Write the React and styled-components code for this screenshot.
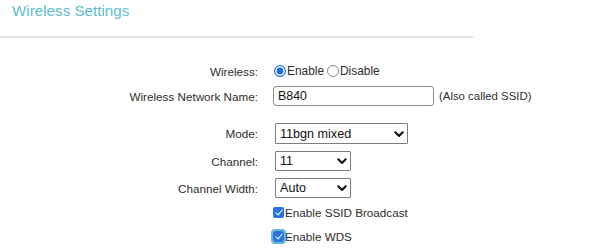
import React from "react";
import styled, { createGlobalStyle } from "styled-components";

const Global = createGlobalStyle`
  html, body { margin: 0; padding: 0; background: #fff; }
  body { font-family: "Liberation Sans", Arial, Helvetica, sans-serif; color: #333; }
`;

const Page = styled.div`
  width: 600px;
  height: 252px;
  overflow: hidden;
  background: #fff;
`;

const Header = styled.div`
  width: 473px;
  height: 38px;
  padding: 2px 0 0 12px;
  box-sizing: border-box;
  border-bottom: 2px solid #e2e2e2;
`;

const Title = styled.h1`
  margin: 0;
  font-size: 15.2px;
  line-height: 18px;
  font-weight: normal;
  color: #5cbdd1;
`;

const Form = styled.div`
  display: flex;
  flex-direction: column;
  padding-top: 23px;
`;

const Row = styled.div`
  display: grid;
  grid-template-columns: 258px auto;
  column-gap: 15px;
  align-items: center;
  height: ${(p) => p.$h || 20}px;
  margin-top: ${(p) => p.$gap || 0}px;
`;

const Label = styled.div`
  text-align: right;
  font-size: 11.7px;
  color: #2e2e2e;
  white-space: nowrap;
`;

const Controls = styled.div`
  display: flex;
  align-items: center;
  font-size: 11.9px;
  color: #2e2e2e;
  white-space: nowrap;
`;

const RadioLabel = styled.label`
  display: inline-flex;
  align-items: center;
  margin-right: 2px;
`;

const Radio = styled.input.attrs({ type: "radio" })`
  appearance: none;
  width: 12px;
  height: 12px;
  margin: 0 1px 0 1px;
  border-radius: 50%;
  box-sizing: border-box;
  border: 1px solid #8a8a8a;
  background: #fff;
  &:checked {
    border: 1px solid #1b6fe0;
    background: #1b6fe0;
    box-shadow: inset 0 0 0 1.6px #fff;
  }
`;

const TextInput = styled.input`
  width: 161px;
  height: 20px;
  box-sizing: border-box;
  border: 1px solid #8d8d8d;
  border-radius: 3px;
  padding: 0 4px;
  font-family: "Liberation Sans", Arial, sans-serif;
  font-size: 12.4px;
  color: #111;
  outline: none;
`;

const Note = styled.span`
  margin-left: 5px;
  font-size: 11.4px;
  color: #2e2e2e;
`;

const SelectWrap = styled.div`
  position: relative;
  margin-left: 2px;
  width: ${(p) => p.$w}px;
  height: ${(p) => p.$h || 20}px;
`;

const Select = styled.select`
  appearance: none;
  width: 100%;
  height: 100%;
  box-sizing: border-box;
  border: 1px solid #7d7d7d;
  border-radius: 1px;
  background: #fff;
  padding: 0 0 0 4px;
  font-family: "Liberation Sans", Arial, sans-serif;
  font-size: 12.6px;
  color: #111;
  outline: none;
`;

const Chevron = styled.svg`
  position: absolute;
  right: 4px;
  top: 50%;
  margin-top: -3px;
  width: 10px;
  height: 7px;
  pointer-events: none;
`;

const CheckLabel = styled.label`
  display: inline-flex;
  align-items: center;
  font-size: 11.7px;
  color: #2e2e2e;
`;

const Check = styled.input.attrs({ type: "checkbox" })`
  appearance: none;
  width: 11px;
  height: 11px;
  margin: 0 1px 0 0;
  box-sizing: border-box;
  border-radius: 2px;
  background: #2a72de;
  position: relative;
  outline: ${(p) => (p.$focus ? "2px solid #5fbcd3" : "none")};
  outline-offset: 0px;
  &::after {
    content: "";
    position: absolute;
    left: 3.5px;
    top: 1px;
    width: 3px;
    height: 6px;
    border: solid #fff;
    border-width: 0 1.8px 1.8px 0;
    transform: rotate(40deg);
  }
`;

const Dropdown = ({ w, h, value, options }) => (
  <SelectWrap $w={w} $h={h}>
    <Select defaultValue={value}>
      {options.map((o) => (
        <option key={o}>{o}</option>
      ))}
    </Select>
    <Chevron viewBox="0 0 10 7">
      <path d="M1.3 1.3 L5 5 L8.7 1.3" fill="none" stroke="#111" strokeWidth="2.1" strokeLinecap="round" strokeLinejoin="round" />
    </Chevron>
  </SelectWrap>
);

export default function App() {
  return (
    <Page>
      <Global />
      <Header>
        <Title>Wireless Settings</Title>
      </Header>
      <Form>
        <Row>
          <Label>Wireless:</Label>
          <Controls>
            <RadioLabel>
              <Radio name="wl" defaultChecked />
              Enable
            </RadioLabel>
            <RadioLabel>
              <Radio name="wl" />
              Disable
            </RadioLabel>
          </Controls>
        </Row>
        <Row $gap={5}>
          <Label>Wireless Network Name:</Label>
          <Controls>
            <TextInput defaultValue="B840" />
            <Note>(Also called SSID)</Note>
          </Controls>
        </Row>
        <Row $gap={17} $h={21}>
          <Label>Mode:</Label>
          <Controls>
            <Dropdown w={133} h={21} value="11bgn mixed" options={["11bgn mixed", "11bg mixed", "11n only"]} />
          </Controls>
        </Row>
        <Row $gap={7}>
          <Label>Channel:</Label>
          <Controls>
            <Dropdown w={76} value="11" options={["Auto", "1", "6", "11"]} />
          </Controls>
        </Row>
        <Row $gap={7}>
          <Label>Channel Width:</Label>
          <Controls>
            <Dropdown w={76} value="Auto" options={["Auto", "20MHz", "40MHz"]} />
          </Controls>
        </Row>
        <Row $gap={4}>
          <Label />
          <Controls>
            <CheckLabel>
              <Check defaultChecked />
              Enable SSID Broadcast
            </CheckLabel>
          </Controls>
        </Row>
        <Row $gap={4}>
          <Label />
          <Controls>
            <CheckLabel>
              <Check defaultChecked $focus />
              Enable WDS
            </CheckLabel>
          </Controls>
        </Row>
      </Form>
    </Page>
  );
}
